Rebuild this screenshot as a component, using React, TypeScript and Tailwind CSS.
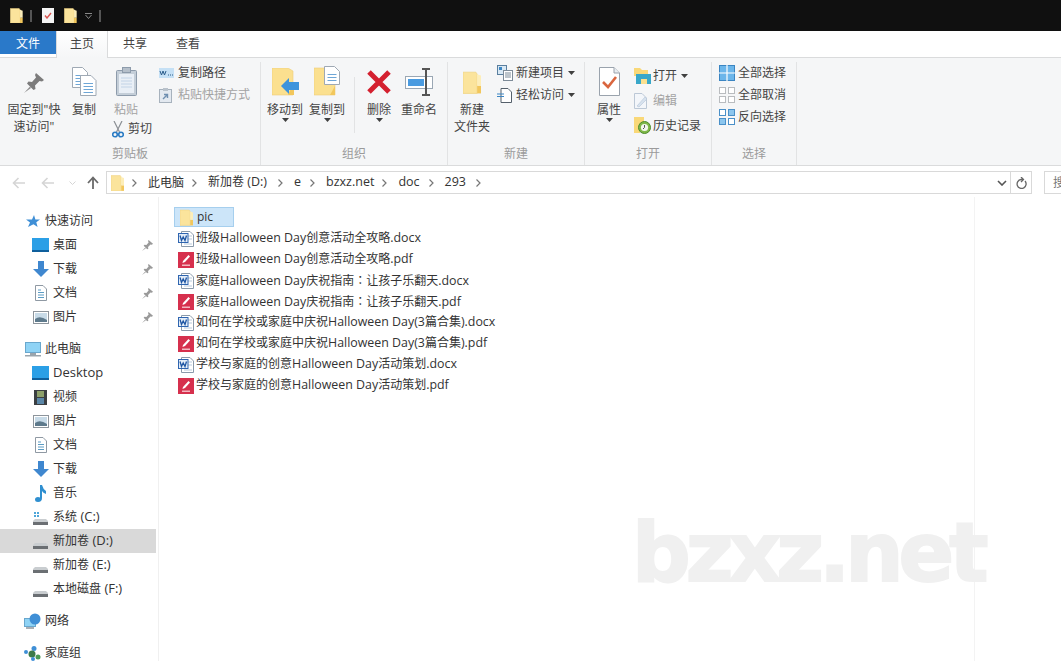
import type { ReactNode } from 'react';

const FONT = "font-['Open_Sans','Noto_Sans_CJK_SC',sans-serif]";

// latin runs get their own size next to the CJK ones, the fullwidth colon is centred in the TC cut
const Txt = ({ s, latin = 'text-[12.4px]' }: { s: string; latin?: string }) => (
  <>
    {s.split(/([\u0000-\u024f]+|：)/).map((part, i) => {
      if (part === '：') {
        return (
          <span key={i} className="font-['Noto_Sans_CJK_TC',sans-serif]">
            {part}
          </span>
        );
      }
      return /[\u0000-\u024f]/.test(part) ? (
        <span key={i} className={latin}>
          {part}
        </span>
      ) : (
        <span key={i}>{part}</span>
      );
    })}
  </>
);

const Folder = ({ w = 14, h = 17 }: { w?: number; h?: number }) => (
  <svg width={w} height={h} viewBox="0 0 14 17">
    <path d="M0 0.5H10L11 2V17H0Z" fill="#fbe49c" stroke="#f0d484" strokeWidth="0.6" />
    <path d="M11 11H14V17H11Z" fill="#f2c75c" />
    <path d="M11 2L14 3V11H11Z" fill="#fdeeb9" />
  </svg>
);

const Caret = () => (
  <svg width="7" height="4" viewBox="0 0 7 4" className="shrink-0">
    <path d="M0 0H7L3.5 4Z" fill="#404040" />
  </svg>
);

const PinIcon = () => (
  <svg width="20" height="20" viewBox="0 0 20 20" className="-translate-y-[3px]">
    <path d="M12 0L20 7L18 8.5L15.5 8L11 12.5L11.5 16L9.5 17L3 10.5L4.5 8.5L8 9L12 4.5L11 2Z" fill="#7c7c7c" />
    <path d="M6 13.5L0 20L7 15Z" fill="#8c8c8c" />
  </svg>
);

const DocLines = ({ x, y, w, h, fill = '#fff' }: { x: number; y: number; w: number; h: number; fill?: string }) => (
  <g>
    <path d={`M${x} ${y}H${x + w - 5}L${x + w} ${y + 5}V${y + h}H${x}Z`} fill={fill} stroke="#9fa9b4" />
    {[8, 11, 14, 17, 20].filter((d) => d < h - 2).map((d) => (
      <path key={d} d={`M${x + 3} ${y + d}H${x + w - 3}`} stroke="#6ea6d6" strokeWidth="1" />
    ))}
  </g>
);

const CopyIcon = () => (
  <svg width="25" height="29" viewBox="0 0 25 29">
    <DocLines x={0.5} y={0.5} w={15} h={20} />
    <DocLines x={8.5} y={8.5} w={15.5} h={20} />
  </svg>
);

const PasteIcon = () => (
  <svg width="21" height="29" viewBox="0 0 21 29">
    <rect x="0.5" y="3.5" width="20" height="25" rx="1" fill="#c4ced8" stroke="#8d9bab" />
    <rect x="3" y="7" width="15" height="19" fill="#e9eff6" />
    <path d="M5 11H16M5 14H16M5 17H16M5 20H16" stroke="#c2d3e6" />
    <rect x="6.5" y="0.5" width="8" height="5" fill="#b5bfca" stroke="#8d9bab" />
  </svg>
);

const ScissorsIcon = () => (
  <svg width="12" height="17" viewBox="0 0 12 17">
    <path d="M2 0L7.5 11M10 0L4.5 11" stroke="#8b8f94" strokeWidth="1.2" fill="none" />
    <circle cx="3" cy="13.5" r="2.3" fill="none" stroke="#2b7cc4" strokeWidth="1.6" />
    <circle cx="9" cy="13.5" r="2.3" fill="none" stroke="#2b7cc4" strokeWidth="1.6" />
  </svg>
);

const PathIcon = () => (
  <svg width="15" height="10" viewBox="0 0 15 10">
    <rect width="15" height="10" fill="#c5e0f5" />
    <path d="M1 3L2.5 7L4 3L5.5 7L7 3M9 7H10M11 7H12M13 7H14" stroke="#2a5c8a" strokeWidth="1" fill="none" />
  </svg>
);

const ShortcutIcon = () => (
  <svg width="13" height="15" viewBox="0 0 13 15">
    <rect x="0.5" y="1.5" width="12" height="13" fill="#e3e9f0" stroke="#a7b2bd" />
    <rect x="4" y="0" width="5" height="3" fill="#b9c2cb" />
    <path d="M4 11L8 7M5 6.5H8.5V10" stroke="#6f8fb0" strokeWidth="1.4" fill="none" />
  </svg>
);

const MoveIcon = () => (
  <svg width="27" height="28" viewBox="0 0 27 28">
    <path d="M0 0H16L21 3V27H0Z" fill="#fbe08f" stroke="#efcf78" strokeWidth="0.6" />
    <path d="M21 16H22V27H16Z" fill="#f2c75c" />
    <path d="M9 18L17 10V14H27V22H17V26Z" fill="#3d94dc" />
  </svg>
);

const CopyToIcon = () => (
  <svg width="27" height="30" viewBox="0 0 27 30">
    <path d="M0 2H16L21 5V29H0Z" fill="#fbe08f" stroke="#efcf78" strokeWidth="0.6" />
    <path d="M21 20V29H16Z" fill="#f2c75c" />
    <DocLines x={10.5} y={0.5} w={15} h={18} />
  </svg>
);

const DeleteIcon = () => (
  <svg width="26" height="26" viewBox="0 0 26 26" className="-translate-y-[1px]">
    <path d="M3 3L23 23M23 3L3 23" stroke="#d4202f" strokeWidth="5" />
  </svg>
);

const RenameIcon = () => (
  <svg width="29" height="28" viewBox="0 0 29 28">
    <rect x="0.5" y="8.5" width="27" height="12" fill="#fff" stroke="#9aa7b4" />
    <rect x="3" y="11" width="16" height="7" fill="#4a9be0" />
    <path d="M17 1H25M21 1V27M17 27H25" stroke="#555" strokeWidth="2" fill="none" />
  </svg>
);

const NewItemIcon = () => (
  <svg width="16" height="16" viewBox="0 0 16 16">
    <rect x="0.5" y="0.5" width="9" height="9" fill="#d8e8f4" stroke="#5a7f9f" />
    <rect x="2" y="2" width="3" height="3" fill="#3c86c4" />
    <rect x="6.5" y="5.5" width="9" height="10" fill="#fff" stroke="#7d8b98" />
    <path d="M8 8H14M8 10H14M8 12H14" stroke="#7d8b98" />
  </svg>
);

const EasyIcon = () => (
  <svg width="15" height="15" viewBox="0 0 15 15">
    <path d="M4 0.5H11L14.5 4V14.5H4Z" fill="#fff" stroke="#55606b" />
    <path d="M0 6H7M0 8.5H7" stroke="#3c86c4" strokeWidth="1.2" />
  </svg>
);

const PropsIcon = () => (
  <svg width="21" height="29" viewBox="0 0 21 29">
    <path d="M0.5 0.5H15L20.5 6V28.5H0.5Z" fill="#fff" stroke="#9aa3ad" />
    <path d="M15 0.5V6H20.5" fill="#e8ecf0" stroke="#9aa3ad" />
    <path d="M4 15L9 20L17 10" stroke="#d9663f" strokeWidth="2.6" fill="none" />
  </svg>
);

const OpenIcon = () => (
  <svg width="17" height="17" viewBox="0 0 17 17">
    <path d="M0 1H6L8 3H14V9H0Z" fill="#f9d878" />
    <path d="M2 7H17V17H13V12H7V17H2Z" fill="#38a7c9" />
    <path d="M7 12H13V17H7Z" fill="#fbe08f" />
  </svg>
);

const EditIcon = () => (
  <svg width="14" height="16" viewBox="0 0 14 16">
    <path d="M0.5 0.5H8L12.5 5V15.5H0.5Z" fill="#f3f6fa" stroke="#bcc8d6" />
    <path d="M3 13L11 4L13 6L5 14Z" fill="#d7e2ee" stroke="#b4c4d6" strokeWidth="0.6" />
  </svg>
);

const HistoryIcon = () => (
  <svg width="17" height="17" viewBox="0 0 17 17">
    <path d="M0 0H10V7H0ZM0 7H6V16H0Z" fill="#f9d878" />
    <circle cx="10.5" cy="10.5" r="6" fill="#7fb848" stroke="#4d8a2c" />
    <circle cx="10.5" cy="10.5" r="3.6" fill="#f2f6ec" />
    <path d="M10.5 8V10.5L9 12" stroke="#555" fill="none" />
  </svg>
);

const Grid4 = ({ colors, stroke }: { colors: string[]; stroke: string }) => (
  <svg width="16" height="16" viewBox="0 0 16 16">
    {[0, 1, 2, 3].map((i) => (
      <rect
        key={i}
        x={(i % 2) * 9 + 0.5}
        y={Math.floor(i / 2) * 9 + 0.5}
        width="6"
        height="6"
        fill={colors[i]}
        stroke={stroke}
      />
    ))}
  </svg>
);

const SelectAllIcon = () => (
  <svg width="16" height="16" viewBox="0 0 16 16">
    <rect x="0.5" y="0.5" width="15" height="15" fill="#6cb6ea" stroke="#3a85c2" />
    <path d="M8 0V16M0 8H16" stroke="#fff" strokeWidth="1.2" />
  </svg>
);

const BigBtn = ({
  w,
  icon,
  lines,
  caret,
  muted,
  ml = 0,
}: {
  w: number;
  icon: ReactNode;
  lines: string[];
  caret?: boolean;
  muted?: boolean;
  ml?: number;
}) => (
  <div className="flex shrink-0 flex-col items-center" style={{ width: w, marginLeft: ml }}>
    <div className="flex h-[35px] w-full items-end justify-center pb-[5px]">{icon}</div>
    {lines.map((l) => (
      <div key={l} className={`h-[17px] whitespace-nowrap leading-[17px] ${muted ? 'text-[#a3a3a3]' : 'text-[#444]'}`}>
        {l}
      </div>
    ))}
    {caret && <Caret />}
  </div>
);

const SmallRow = ({
  icon,
  label,
  caret,
  muted,
  h = 22,
  iconW = 19,
}: {
  icon: ReactNode;
  label: string;
  caret?: boolean;
  muted?: boolean;
  h?: number;
  iconW?: number;
}) => (
  <div className="flex items-center whitespace-nowrap" style={{ height: h }}>
    <div className="flex shrink-0 justify-start" style={{ width: iconW }}>
      {icon}
    </div>
    <span className={muted ? 'text-[#a3a3a3]' : 'text-[#444]'}>{label}</span>
    {caret && (
      <span className="ml-[4px]">
        <Caret />
      </span>
    )}
  </div>
);

const Group = ({ w, label, children }: { w: number; label: string; children: ReactNode }) => (
  <div className="flex h-full shrink-0 flex-col border-r border-[#e2e3e4]" style={{ width: w }}>
    <div className="flex flex-1">{children}</div>
    <div className="mb-[3px] h-[16px] text-center leading-[16px] text-[#9b9b9b]">{label}</div>
  </div>
);

const Crumb = ({ s, ml }: { s: string; ml: number }) => (
  <>
    <svg width="5" height="8" viewBox="0 0 5 8" className="shrink-0" style={{ marginLeft: ml }}>
      <path d="M0.5 0.5L4 4L0.5 7.5" stroke="#777" fill="none" strokeWidth="1.2" />
    </svg>
    {s && (
      <span className="ml-[11px] text-[#333]">
        <Txt s={s} latin="text-[12.5px]" />
      </span>
    )}
  </>
);

const Arrow = ({ color }: { color: string }) => (
  <svg width="14" height="12" viewBox="0 0 14 12">
    <path d="M13 6H2M6.5 1L1.5 6L6.5 11" stroke={color} strokeWidth="1.6" fill="none" />
  </svg>
);

const DesktopIcon = () => (
  <svg width="17" height="14" viewBox="0 0 17 14">
    <rect width="17" height="14" fill="#2b9fe6" />
    <rect y="12" width="17" height="2" fill="#0f5f9c" />
  </svg>
);

const DownIcon = () => (
  <svg width="16" height="16" viewBox="0 0 16 16">
    <path d="M5 0H11V8H16L8 16L0 8H5Z" fill="#3f87cf" />
  </svg>
);

const DocIcon = () => (
  <svg width="12" height="16" viewBox="0 0 12 16">
    <path d="M0.5 0.5H8L11.5 4V15.5H0.5Z" fill="#fff" stroke="#8f99a3" />
    <path d="M3 5H6M3 7.5H9M3 10H9M3 12.5H9" stroke="#5c9cc4" />
  </svg>
);

const PicIcon = () => (
  <svg width="16" height="13" viewBox="0 0 16 13">
    <rect x="0.5" y="0.5" width="15" height="12" fill="#fff" stroke="#8d959c" />
    <rect x="2" y="2" width="12" height="9" fill="#c8dbe8" />
    <path d="M2 8Q7 4 14 9V11H2Z" fill="#5e7a8c" />
  </svg>
);

const PcIcon = () => (
  <svg width="16" height="15" viewBox="0 0 16 15">
    <rect x="0.5" y="0.5" width="15" height="10" fill="#8fd3f5" stroke="#69a7cd" />
    <rect x="5" y="11" width="6" height="2" fill="#9aa5ad" />
    <rect y="13" width="16" height="1.5" fill="#9aa5ad" />
  </svg>
);

const VideoIcon = () => (
  <svg width="13" height="15" viewBox="0 0 13 15">
    <rect width="13" height="15" fill="#3b3f42" />
    <rect x="3" y="1" width="7" height="6" fill="#8da06a" />
    <rect x="3" y="8" width="7" height="6" fill="#5b87a8" />
  </svg>
);

const MusicIcon = () => (
  <svg width="11" height="17" viewBox="0 0 11 17">
    <path d="M5 0H7Q8 4 11 6V9Q8 8 7 6V13Q7 17 3 17Q0 17 0 14.5Q0 12 3 12Q4 12 5 12.5Z" fill="#2f8fd0" />
  </svg>
);

const DriveIcon = ({ sys }: { sys?: boolean }) => (
  <svg width="15" height="14" viewBox="0 0 15 14" className="translate-y-[2px]">
    {sys && <path d="M1 0H3V2H1ZM4 0H6V2H4ZM1 3H3V5H1ZM4 3H6V5H4Z" fill="#4ea6d8" />}
    <path d="M2 7H13L15 9V10H0V9Z" fill="#c9cdd0" />
    <rect y="10" width="15" height="3" fill="#6b6f73" />
  </svg>
);

const NetIcon = () => (
  <svg width="17" height="17" viewBox="0 0 17 17">
    <rect x="0.5" y="5.5" width="11" height="8" fill="#8fd3f5" stroke="#69a7cd" />
    <path d="M2 15H10" stroke="#8d959c" strokeWidth="1.5" />
    <circle cx="11" cy="6" r="5.5" fill="#3f8fd6" />
  </svg>
);

const HomeIcon = () => (
  <svg width="17" height="15" viewBox="0 0 17 15">
    <circle cx="2" cy="6" r="2" fill="#3f8fd6" />
    <circle cx="10" cy="2.5" r="2.5" fill="#3f8fd6" />
    <circle cx="8" cy="8" r="3.5" fill="#3c7a4a" />
    <circle cx="14" cy="11" r="2.5" fill="#4c9a55" />
    <circle cx="9" cy="13" r="2" fill="#3f8fd6" />
  </svg>
);

const StarIcon = () => (
  <svg width="14" height="13" viewBox="0 0 14 13">
    <path d="M8 0L9.4 4.4H14L10.3 7.2L11.6 12L7.5 9.2L2 12L4 7.4L0 4.4H6Z" fill="#3f8fd6" />
  </svg>
);

const NavPin = () => (
  <svg width="11" height="11" viewBox="0 0 20 20">
    <path d="M12 0L20 7L18 8.5L15.5 8L11 12.5L11.5 16L9.5 17L3 10.5L4.5 8.5L8 9L12 4.5L11 2Z" fill="#9a9a9a" />
    <path d="M6 13.5L0 20L7 15Z" fill="#9a9a9a" />
  </svg>
);

const NavRow = ({
  icon,
  label,
  top,
  pin,
  selected,
}: {
  icon: ReactNode;
  label: string;
  top?: boolean;
  pin?: boolean;
  selected?: boolean;
}) => (
  <div className={`flex h-6 items-center whitespace-nowrap text-[#333] ${selected ? 'bg-[#d9d9d9]' : ''}`}>
    <div className={`flex w-[21px] shrink-0 justify-center ${top ? 'ml-[24px]' : 'ml-[32px]'}`}>
      <div className="-ml-[4px] flex w-[17px] justify-center">{icon}</div>
    </div>
    <span>
      <Txt s={label} latin="text-[13px]" />
    </span>
    {pin && (
      <span className="ml-auto mr-[3px] flex">
        <NavPin />
      </span>
    )}
  </div>
);

const WordIcon = () => (
  <svg width="16" height="16" viewBox="0 0 16 16">
    <path d="M3.5 0.5H12L15.5 4V15.5H3.5Z" fill="#fff" stroke="#8a9aab" />
    <path d="M10 5H14M10 8H14M6 13H14" stroke="#b7c9dc" />
    <rect x="0.5" y="2.5" width="9.5" height="9" fill="#e3edf8" stroke="#2f65b0" />
    <path d="M2 4.5L3.5 9.5L5.2 6L7 9.5L8.5 4.5" stroke="#1f56a3" strokeWidth="1.3" fill="none" />
  </svg>
);

const PdfIcon = () => (
  <svg width="16" height="16" viewBox="0 0 16 16">
    <rect width="16" height="16" fill="#d6304d" />
    <path d="M5 9L10.5 3L12 4.5L7 10L4.5 11Z" fill="#fff" />
    <path d="M4 12.5H12V14H4Z" fill="#f3b6c0" />
  </svg>
);

const files = [
  '班级Halloween Day创意活动全攻略.docx',
  '班级Halloween Day创意活动全攻略.pdf',
  '家庭Halloween Day庆祝指南：让孩子乐翻天.docx',
  '家庭Halloween Day庆祝指南：让孩子乐翻天.pdf',
  '如何在学校或家庭中庆祝Halloween Day(3篇合集).docx',
  '如何在学校或家庭中庆祝Halloween Day(3篇合集).pdf',
  '学校与家庭的创意Halloween Day活动策划.docx',
  '学校与家庭的创意Halloween Day活动策划.pdf',
];

export default function App() {
  return (
    <div className={`relative flex h-[661px] w-[1061px] flex-col overflow-hidden bg-white text-[12px] ${FONT}`}>
      {/* title bar */}
      <div className="flex h-[31px] shrink-0 items-center bg-[#101010] pl-[10px]">
        <Folder w={13} h={15} />
        <div className="ml-[7px] h-[12px] w-[2px] bg-[#555]" />
        <div className="ml-[10px] flex h-[15px] w-[12px] items-center justify-center bg-[#f4f4f4]">
          <svg width="8" height="7" viewBox="0 0 8 7">
            <path d="M1 3.5L3 6L7 1" stroke="#d9534f" strokeWidth="1.4" fill="none" />
          </svg>
        </div>
        <div className="ml-[10px]">
          <Folder w={13} h={15} />
        </div>
        <svg width="7" height="6" viewBox="0 0 7 6" className="ml-[8px]">
          <path d="M0 0.5H7M0.5 2L3.5 5.5L6.5 2" stroke="#8a8a8a" fill="none" />
        </svg>
        <div className="ml-[7px] h-[12px] w-[2px] bg-[#555]" />
      </div>

      {/* tabs */}
      <div className="flex h-[27px] shrink-0 items-start border-b border-[#dadbdc]">
        <div className="flex h-[23px] w-[56px] items-center justify-center bg-[#2a79c9] pt-[2px] text-white">文件</div>
        <div className="relative z-10 flex h-[27px] w-[52px] items-center justify-center border-x border-[#dadbdc] bg-gradient-to-b from-white to-[#f5f6f7] pb-[1px] text-[#444]">
          主页
        </div>
        <div className="flex h-[23px] w-[54px] items-center justify-center pt-[2px] text-[#444]">共享</div>
        <div className="flex h-[23px] w-[52px] items-center justify-center pt-[2px] text-[#444]">查看</div>
      </div>

      {/* ribbon */}
      <div className="flex h-[108px] shrink-0 border-b border-[#dadbdc] bg-[#f5f6f7] pt-[4px]">
        <Group w={261} label="剪贴板">
          <div className="flex pt-[4px]">
            <BigBtn ml={6} w={56} icon={<PinIcon />} lines={['固定到"快', '速访问"']} />
            <BigBtn w={44} icon={<CopyIcon />} lines={['复制']} />
            <div>
              <BigBtn w={40} icon={<PasteIcon />} lines={['粘贴']} muted />
              <div className="ml-[6px] mt-[2px] flex h-[18px] items-center whitespace-nowrap text-[#444]">
                <ScissorsIcon />
                <span className="ml-[4px]">剪切</span>
              </div>
            </div>
          </div>
          <div className="ml-[7px]">
            <SmallRow icon={<PathIcon />} label="复制路径" />
            <SmallRow icon={<ShortcutIcon />} label="粘贴快捷方式" muted />
          </div>
        </Group>
        <Group w={187} label="组织">
          <div className="flex pt-[4px]">
            <BigBtn w={52} ml={-2} icon={<MoveIcon />} lines={['移动到']} caret />
            <BigBtn w={32} icon={<CopyToIcon />} lines={['复制到']} caret />
            <div className="ml-[11px] mt-[11px] h-[56px] w-px bg-[#e2e3e4]" />
            <BigBtn w={48} icon={<DeleteIcon />} lines={['删除']} caret />
            <BigBtn w={32} icon={<RenameIcon />} lines={['重命名']} />
          </div>
        </Group>
        <Group w={137} label="新建">
          <div className="flex pt-[4px]">
            <BigBtn w={48} icon={<Folder w={18} h={27} />} lines={['新建', '文件夹']} />
          </div>
          <div className="ml-[1px]">
            <SmallRow icon={<NewItemIcon />} label="新建项目" caret />
            <SmallRow icon={<EasyIcon />} label="轻松访问" caret />
          </div>
        </Group>
        <Group w={127} label="打开">
          <div className="flex pt-[4px]">
            <BigBtn w={48} icon={<PropsIcon />} lines={['属性']} caret />
          </div>
          <div className="ml-[1px] pt-[1px]">
            <SmallRow h={25} icon={<OpenIcon />} label="打开" caret />
            <SmallRow h={25} icon={<EditIcon />} label="编辑" muted />
            <SmallRow h={25} icon={<HistoryIcon />} label="历史记录" />
          </div>
        </Group>
        <Group w={85} label="选择">
          <div className="ml-[7px]">
            <SmallRow icon={<SelectAllIcon />} label="全部选择" />
            <SmallRow icon={<Grid4 colors={['#fff', '#fff', '#fff', '#fff']} stroke="#b9bcbf" />} label="全部取消" />
            <SmallRow icon={<Grid4 colors={['#fff', '#8cc6ee', '#8cc6ee', '#fff']} stroke="#4a90c8" />} label="反向选择" />
          </div>
        </Group>
      </div>

      {/* address row */}
      <div className="flex h-[31px] shrink-0 items-center bg-white pb-[3px] pt-[5px]">
        <div className="ml-[12px] flex w-[94px] shrink-0 items-center">
          <Arrow color="#d5d5d5" />
          <div className="ml-[15px]">
            <Arrow color="#d5d5d5" />
          </div>
          <svg width="7" height="4" viewBox="0 0 7 4" className="ml-[14px]">
            <path d="M0.5 0.5L3.5 3.5L6.5 0.5" stroke="#d5d5d5" fill="none" />
          </svg>
          <svg width="12" height="14" viewBox="0 0 12 14" className="ml-[11px]">
            <path d="M6 13V2M1 7L6 1.5L11 7" stroke="#6a6a6a" strokeWidth="1.8" fill="none" />
          </svg>
        </div>
        <div className="flex h-[23px] w-[926px] shrink-0 items-center border border-[#d9d9d9] pl-[4px]">
          <Folder w={13} h={16} />
          <Crumb ml={8} s="此电脑" />
          <Crumb ml={8} s="新加卷 (D:)" />
          <Crumb ml={11} s="e" />
          <Crumb ml={9} s="bzxz.net" />
          <Crumb ml={8} s="doc" />
          <Crumb ml={9} s="293" />
          <Crumb ml={10} s="" />
          <svg width="10" height="6" viewBox="0 0 10 6" className="ml-auto">
            <path d="M1 1L5 5L9 1" stroke="#555" strokeWidth="1.6" fill="none" />
          </svg>
          <div className="ml-[3px] flex h-full w-[21px] items-center justify-center border-l border-[#d9d9d9]">
            <svg width="11" height="12" viewBox="0 0 11 12">
              <path d="M9 4A4.5 4.5 0 1 1 5 2.5H7M5 0L7.5 2.5L5 5" stroke="#666" strokeWidth="1.3" fill="none" />
            </svg>
          </div>
        </div>
        <div className="ml-[12px] flex h-[23px] w-[40px] shrink-0 items-center border border-[#d9d9d9] pl-[8px] text-[#777]">
          搜索
        </div>
      </div>

      {/* main */}
      <div className="flex min-h-0 flex-1">
        <div className="w-[159px] shrink-0 border-r border-[#f0f0f0] pt-[12px]">
          <div className="w-[156px]">
            <NavRow top icon={<StarIcon />} label="快速访问" />
            <NavRow icon={<DesktopIcon />} label="桌面" pin />
            <NavRow icon={<DownIcon />} label="下载" pin />
            <NavRow icon={<DocIcon />} label="文档" pin />
            <NavRow icon={<PicIcon />} label="图片" pin />
            <div className="h-2" />
            <NavRow top icon={<PcIcon />} label="此电脑" />
            <NavRow icon={<DesktopIcon />} label="Desktop" />
            <NavRow icon={<VideoIcon />} label="视频" />
            <NavRow icon={<PicIcon />} label="图片" />
            <NavRow icon={<DocIcon />} label="文档" />
            <NavRow icon={<DownIcon />} label="下载" />
            <NavRow icon={<MusicIcon />} label="音乐" />
            <NavRow icon={<DriveIcon sys />} label="系统 (C:)" />
            <NavRow icon={<DriveIcon />} label="新加卷 (D:)" selected />
            <NavRow icon={<DriveIcon />} label="新加卷 (E:)" />
            <NavRow icon={<DriveIcon />} label="本地磁盘 (F:)" />
            <div className="h-2" />
            <NavRow top icon={<NetIcon />} label="网络" />
            <div className="h-2" />
            <NavRow top icon={<HomeIcon />} label="家庭组" />
          </div>
        </div>
        <div className="w-[816px] shrink-0 border-r border-[#f3f3f3] pl-[15px] pt-[10px]">
          <div className="mb-[1px] flex h-[20px] w-[60px] items-center border border-[#a6cfee] bg-[#cce5f9] pl-[5px] text-[#333]">
            <Folder w={13} h={17} />
            <span className="ml-[4px] text-[12px]">pic</span>
          </div>
          {files.map((f) => (
            <div key={f} className="flex h-[21px] items-center whitespace-nowrap pl-[4px] text-[#333]">
              {f.endsWith('pdf') ? <PdfIcon /> : <WordIcon />}
              <span className="ml-[2px]">
                <Txt s={f} />
              </span>
            </div>
          ))}
        </div>
      </div>

      {/* watermark */}
      <div className="absolute left-[632px] top-[505px] font-['DejaVu_Sans',sans-serif] text-[82px] font-bold leading-[95px] tracking-[-5px] text-[#f0f0f0] [-webkit-text-stroke:2px_#f0f0f0]">
        bzxz.net
      </div>
    </div>
  );
}
